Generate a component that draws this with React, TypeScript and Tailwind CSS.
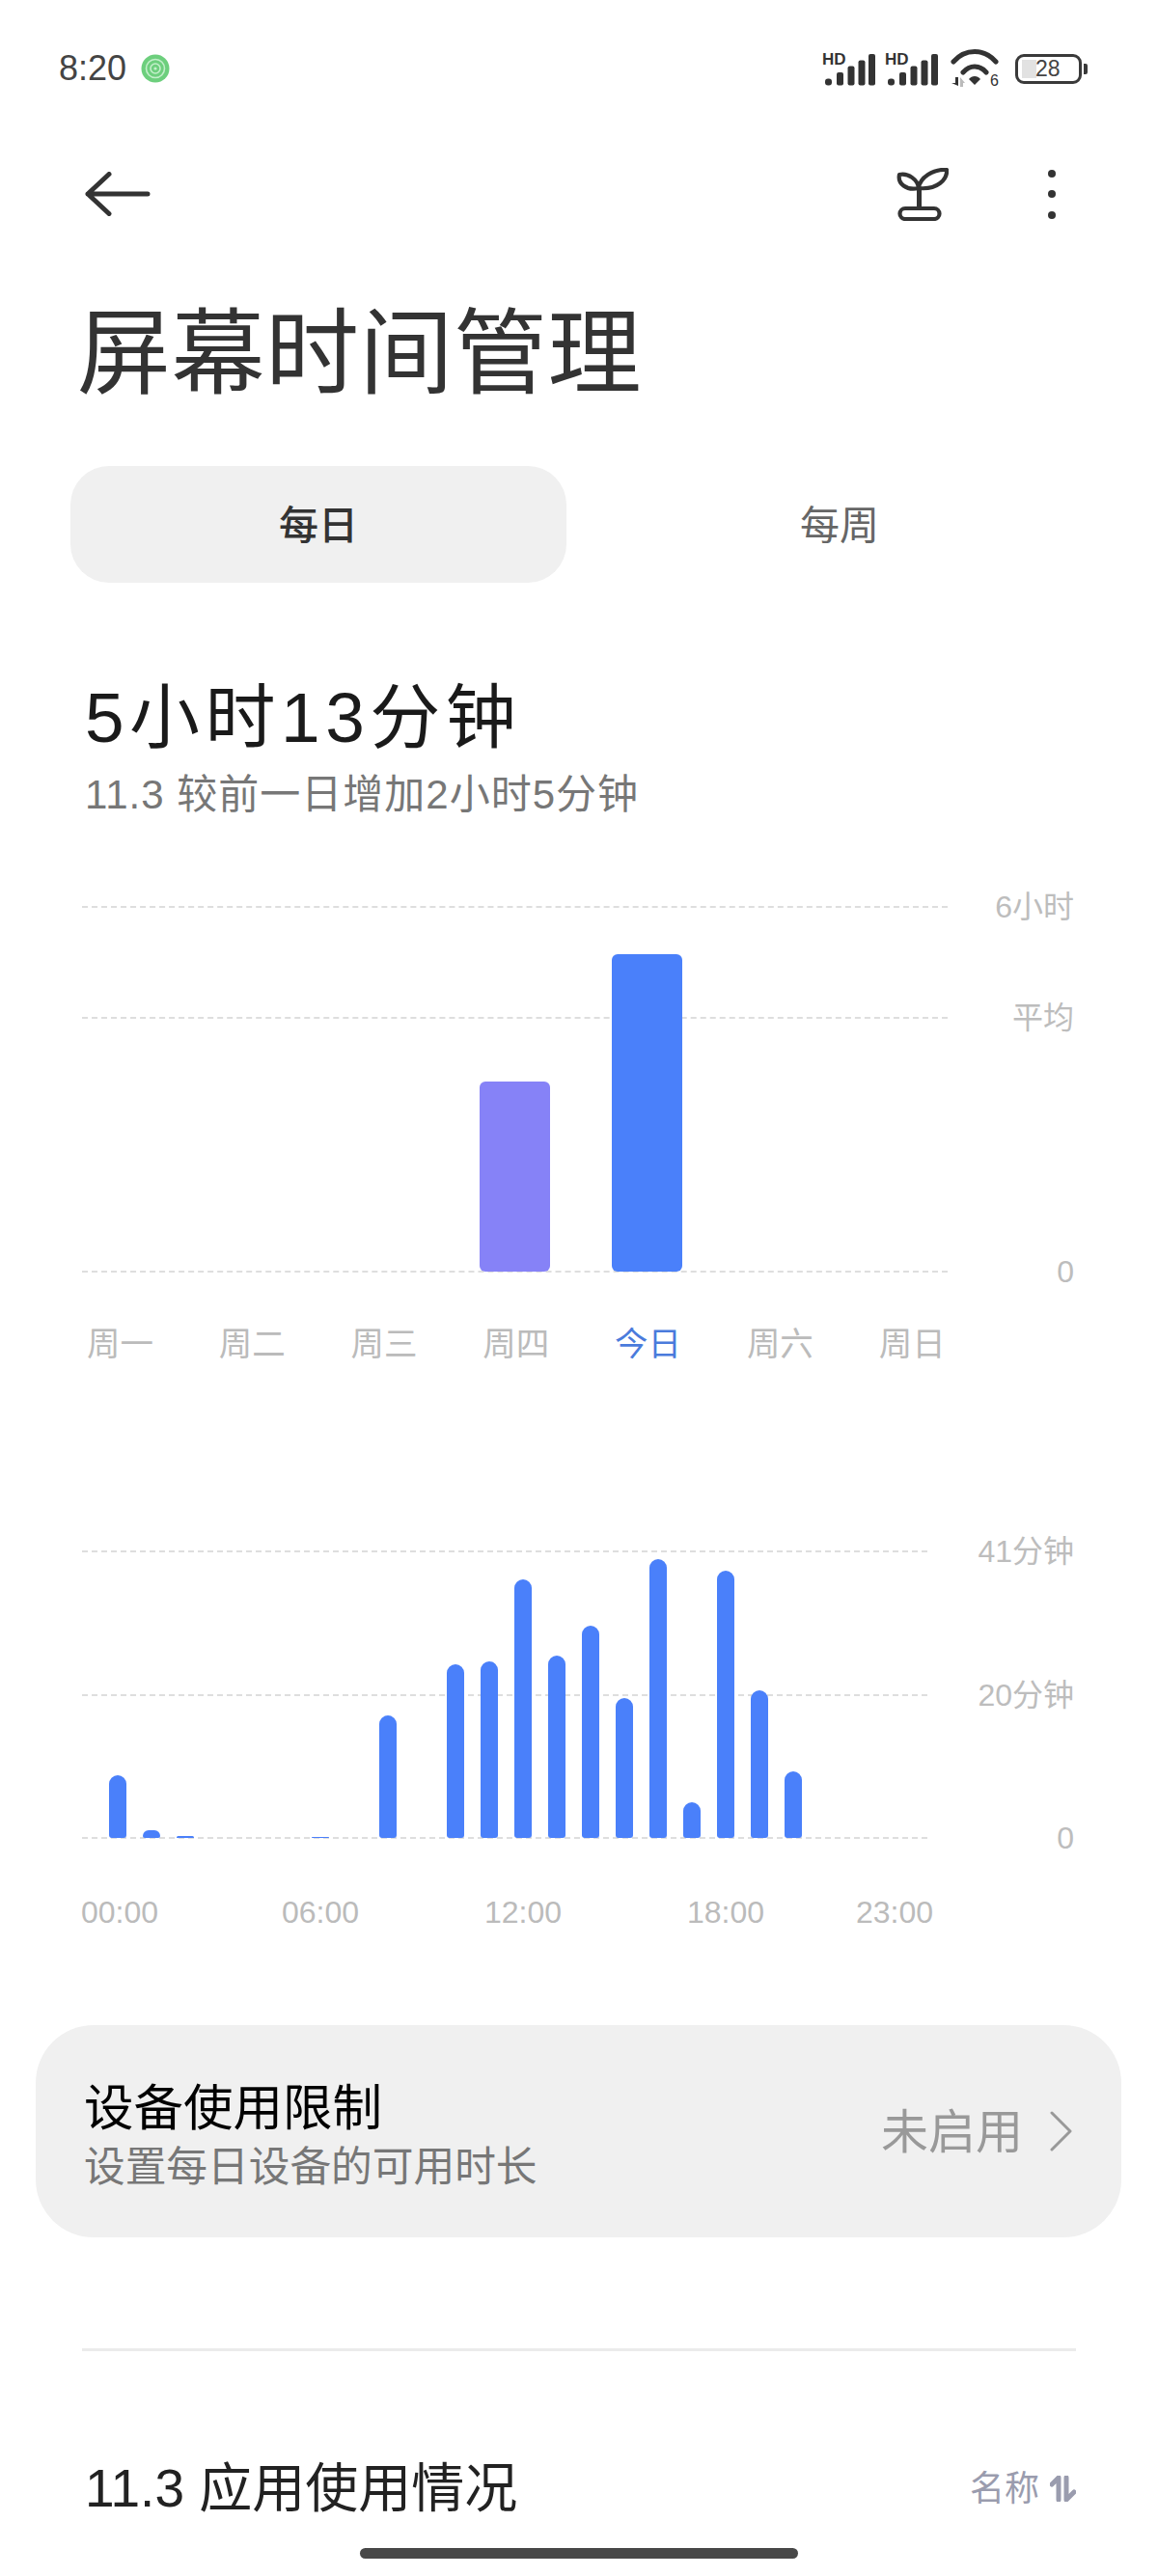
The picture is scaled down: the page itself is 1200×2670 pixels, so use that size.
import React from 'react';

const WEEK_DAYS = ['周一', '周二', '周三', '周四', '今日', '周六', '周日'];
// bar height in px per hour of the day, 0 = nothing used
const HOURS = [65, 8, 2, 0, 0, 0, 1, 0, 127, 0, 180, 183, 268, 189, 220, 145, 289, 37, 277, 153, 69, 0, 0, 0];

function SignalIcon() {
    return (
        <svg width="55" height="36" viewBox="0 0 55 36" fill="#333">
            <text x="0" y="14" fontSize="17" fontWeight="700" fontFamily="Liberation Sans, sans-serif">HD</text>
            <rect x="3" y="28.5" width="7" height="7" rx="3" />
            <rect x="15" y="22" width="7" height="13.5" rx="2" />
            <rect x="26.5" y="15.5" width="7" height="20" rx="2" />
            <rect x="37.5" y="9.5" width="7" height="26" rx="2" />
            <rect x="48" y="3" width="7" height="32.5" rx="2" />
        </svg>
    );
}

function WifiIcon() {
    return (
        <svg width="52" height="40" viewBox="0 0 52 40">
            <path d="M3 13 C15 -1 35 -1 47 13" fill="none" stroke="#333" strokeWidth="5" strokeLinecap="round" />
            <path d="M13 24 C20 16 30 16 37 24" fill="none" stroke="#333" strokeWidth="5" strokeLinecap="round" />
            <path d="M19 31 C22 27 28 27 31 31 L25 37 Z" fill="#333" />
            <path d="M1 35 L5 35 L5 29 L8 29 L8 38 Z" fill="#333" />
            <path d="M10 39 L10 29 L15 35 L13 35 L13 39 Z" fill="#bbb" />
            <text x="41" y="38" fontSize="16" fill="#333" fontFamily="Liberation Sans, sans-serif">6</text>
        </svg>
    );
}

function Sprout() {
    return (
        <svg width="54" height="55" viewBox="0 0 54 55" fill="none" stroke="#333" strokeWidth="4.2" strokeLinejoin="round">
            <rect x="3.5" y="42" width="41" height="11" rx="5.5" />
            <path d="M23.5 20 V42" strokeWidth="5" />
            <path d="M23 21 C22 12 12 5 3 7 C1 16 10 24 23 21 Z" />
            <path d="M23 21 C24 10 38 1 52 2 C53 12 42 23 23 21 Z" />
        </svg>
    );
}

function GridLine({ label, className }: { label: string; className: string }) {
    return (
        <div className={`flex h-0 items-center ${className}`}>
            <div className="flex-1 border-t-2 border-dashed border-[#dedede]" />
            <span className="text-right text-[32px] leading-none text-[#bdbdbd]">{label}</span>
        </div>
    );
}

export default function App() {
    return (
        <div className="h-[2670px] w-[1200px] overflow-hidden bg-white font-['Liberation_Sans','Noto_Sans_CJK_SC',sans-serif] text-[#333]">
            {/* status bar */}
            <div className="flex h-[142px] items-center pl-[61px] pr-[73px]">
                <span className="text-[36px] leading-none text-[#444]">8:20</span>
                <svg className="ml-[15px]" width="30" height="30" viewBox="0 0 30 30" fill="none">
                    <circle cx="15" cy="15" r="14.5" fill="#6dcf7d" />
                    <circle cx="15" cy="15" r="9.5" stroke="#c4efcb" strokeWidth="1.6" />
                    <circle cx="15" cy="15" r="5" stroke="#c4efcb" strokeWidth="1.6" />
                    <circle cx="15" cy="15" r="1.6" fill="#c4efcb" />
                </svg>
                <div className="ml-auto flex items-center">
                    <SignalIcon />
                    <div className="ml-[10px]"><SignalIcon /></div>
                    <div className="ml-[13px]"><WifiIcon /></div>
                    <div className="ml-[15px] flex h-[31px] w-[69px] items-center rounded-[9px] border-[3.5px] border-[#3a3a3a] pl-[4px]">
                        <div className="h-[19px] w-[15px] bg-[#e2e2e2]" />
                        <span className="ml-[-1px] text-[23px] leading-none text-[#444]">28</span>
                    </div>
                    <div className="ml-[2px] h-[11px] w-[4px] rounded-r-[2px] bg-[#3a3a3a]" />
                </div>
            </div>

            {/* toolbar */}
            <div className="flex h-[118px] items-center pl-[88px]">
                <svg width="68" height="46" viewBox="0 0 68 46" fill="none" stroke="#333" strokeWidth="5" strokeLinecap="round" strokeLinejoin="round">
                    <path d="M25 2.5 L3 23 L25 43.5 M3 23 H65" />
                </svg>
                <div className="ml-[773px]"><Sprout /></div>
                <div className="ml-[103px] flex flex-col gap-[13.5px]">
                    <div className="size-[8px] rounded-full bg-[#333]" />
                    <div className="size-[8px] rounded-full bg-[#333]" />
                    <div className="size-[8px] rounded-full bg-[#333]" />
                </div>
            </div>

            {/* title */}
            <div className="flex h-[212px] items-center pl-[80px] text-[97px] leading-none tracking-[0.5px] text-[#333]">屏幕时间管理</div>

            {/* tabs */}
            <div className="ml-[73px] mt-[11px] flex h-[121px] items-center">
                <div className="flex h-full w-[514px] items-center justify-center rounded-[40px] bg-[#f0f0f0] pt-[5px] text-[41px] font-medium text-[#333]">每日</div>
                <div className="ml-[26px] w-[514px] pt-[5px] text-center text-[41px] text-[#666]">每周</div>
            </div>

            {/* summary */}
            <div className="ml-[88px] mt-[104px] h-[72px] text-[73px] leading-[72px] tracking-[5.5px] text-[#1a1a1a]">5小时13分钟</div>
            <div className="ml-[88px] mt-[19px] h-[50px] text-[42px] leading-[50px] tracking-[1px] text-[#777]">11.3 较前一日增加2小时5分钟</div>

            {/* daily chart */}
            <div className="relative mt-[91px] h-[378px] pl-[85px] pr-[87px]">
                <GridLine label="6小时" className="gap-[49px]" />
                <GridLine label="平均" className="mt-[115px] gap-[67px]" />
                <GridLine label="0" className="mt-[263px] gap-[113px]" />
                <div className="absolute bottom-0 left-[55px] grid grid-cols-[repeat(7,136.8px)] items-end">
                    <div />
                    <div />
                    <div />
                    <div className="mx-auto h-[197px] w-[73px] rounded-[6px] bg-[#8682f7]" />
                    <div className="mx-auto h-[329px] w-[73px] rounded-[6px] bg-[#4a80fa]" />
                </div>
            </div>
            <div className="ml-[56px] mt-[50px] grid h-[50px] grid-cols-[repeat(7,136.8px)] items-center">
                {WEEK_DAYS.map(day => (
                    <div key={day} className={`text-center text-[34.5px] leading-[50px] ${day === '今日' ? 'text-[#4a7bdc]' : 'text-[#bbb]'}`}>
                        {day}
                    </div>
                ))}
            </div>

            {/* hourly chart */}
            <div className="relative mt-[190px] h-[297px] pl-[85px] pr-[87px]">
                <GridLine label="41分钟" className="gap-[52px]" />
                <GridLine label="20分钟" className="mt-[149px] gap-[52px]" />
                <GridLine label="0" className="mt-[148px] gap-[134px]" />
                <div className="absolute bottom-0 left-[104.5px] flex items-end">
                    {HOURS.map((height, hour) => (
                        <div key={hour} className="flex w-[35px] justify-center">
                            <div className="w-[18px] rounded-b-[3px] rounded-t-[9px] bg-[#4a80fa]" style={{ height }} />
                        </div>
                    ))}
                </div>
            </div>
            <div className="ml-[83px] mt-[52px] flex h-[50px] items-center text-[32px] text-[#bbb]">
                <span className="w-[82px] text-center">00:00</span>
                <span className="ml-[126px] w-[82px] text-center">06:00</span>
                <span className="ml-[128px] w-[82px] text-center">12:00</span>
                <span className="ml-[128px] w-[82px] text-center">18:00</span>
                <span className="ml-[93px] w-[82px] text-center">23:00</span>
            </div>

            {/* usage limit card */}
            <div className="ml-[37px] mt-[92px] flex h-[220px] w-[1125px] items-center rounded-[60px] bg-[#f0f0f0] pl-[50px] pr-[51px]">
                <div className="pt-[12px]">
                    <div className="text-[51.5px] leading-[62px] text-black">设备使用限制</div>
                    <div className="text-[42.7px] leading-[60px] text-[#777]">设置每日设备的可用时长</div>
                </div>
                <span className="ml-auto pt-[3px] text-[49px] leading-none text-[#999]">未启用</span>
                <svg className="ml-[28px]" width="23" height="42" viewBox="0 0 23 42" fill="none" stroke="#999" strokeWidth="3" strokeLinecap="round" strokeLinejoin="round">
                    <path d="M2 2 L21 21 L2 40" />
                </svg>
            </div>

            <div className="ml-[85px] mt-[115px] h-[3px] w-[1030px] bg-[#ebebeb]" />

            {/* app usage header */}
            <div className="mt-[110px] flex h-[60px] items-center pl-[88px] pr-[85px] pt-[5px]">
                <span className="text-[55px] leading-none text-[#222]">11.3 应用使用情况</span>
                <span className="ml-auto text-[36px] leading-none text-[#9a9cae]">名称</span>
                <svg className="ml-[11px]" width="27" height="27" viewBox="0 0 27 27" fill="none" stroke="#9a9cae" strokeWidth="5" strokeLinecap="round" strokeLinejoin="round">
                    <path d="M9 25 V2 L2 9 M17 2 V25 L25 17" />
                </svg>
            </div>

            {/* home indicator */}
            <div className="ml-[373px] mt-[34px] h-[11px] w-[454px] rounded-[6px] bg-[#484848]" />
        </div>
    );
}
